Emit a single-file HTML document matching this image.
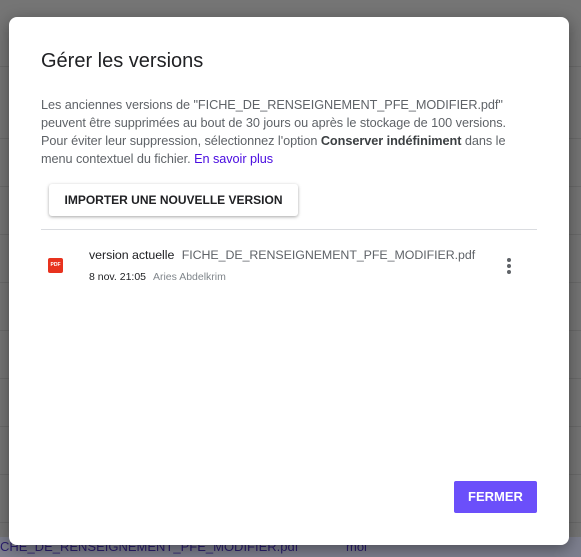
<!DOCTYPE html>
<html><head><meta charset="utf-8"><style>
body{margin:0;width:581px;height:557px;overflow:hidden;background:#757575;font-family:"Liberation Sans",sans-serif;position:relative}
.bgl{position:absolute;left:0;width:581px;height:1px;background:#6a6a6a}
.bt{position:absolute;color:#333;font-size:15px}
.dlg{position:absolute;left:9px;top:17px;width:560px;height:528px;background:#fff;border-radius:8px;box-shadow:0 4px 16px rgba(0,0,0,.4)}
h1{position:absolute;left:32px;top:33px;margin:0;font-weight:normal;font-size:20px;color:#202124}
.p{position:absolute;left:32px;top:79px;font-size:12.7px;line-height:18px;color:#5f6368;letter-spacing:-.05px;white-space:nowrap}
.p b{color:#3c4043}
.p a{color:#4a0de0;text-decoration:none}
.imp{position:absolute;left:40px;top:167px;width:249px;height:32px;box-shadow:0 1px 3px rgba(0,0,0,.35);border-radius:3px;font-size:12px;font-weight:bold;color:#202124;line-height:32px;text-align:center}
.hr{position:absolute;left:32px;top:212px;width:496px;height:1px;background:#dadce0}
.pdf{position:absolute;left:39px;top:241px;width:15px;height:15px;background:#e8321e;border-radius:2px;color:#fff;font-size:5px;font-weight:bold;line-height:15px;text-align:center}
.l1{position:absolute;left:80px;top:231px;font-size:12.4px;color:#202124;letter-spacing:-.05px}
.l1 span{color:#5f6368;margin-left:4px}
.l2{position:absolute;left:80px;top:254px;font-size:10.5px;color:#202124}
.l2 span{color:#80868b;margin-left:4px}
.dot{position:absolute;left:498px;width:4px;height:4px;border-radius:2px;background:#5f6368}
.fer{position:absolute;left:445px;top:464px;width:83px;height:32px;background:#6b4ffa;border-radius:2px;color:#fff;font-size:13px;font-weight:bold;line-height:32px;text-align:center}
</style></head><body>
<div class="bgl" style="top:66px"></div><div class="bgl" style="top:138px"></div><div class="bgl" style="top:186px"></div><div class="bgl" style="top:234px"></div><div class="bgl" style="top:282px"></div><div class="bgl" style="top:330px"></div><div class="bgl" style="top:378px"></div><div class="bgl" style="top:426px"></div><div class="bgl" style="top:474px"></div><div class="bgl" style="top:522px"></div>
<div style="position:absolute;left:0;top:537px;width:581px;height:20px;background:#7d7f8e"></div>
<div class="bt" style="left:0;top:539px;color:#2a1d6e;font-size:13px">CHE_DE_RENSEIGNEMENT_PFE_MODIFIER.pdf</div>
<div class="bt" style="left:346px;top:539px;color:#2a1d6e;font-size:13px">moi</div>
<div class="dlg">
<h1>Gérer les versions</h1>
<div class="p">Les anciennes versions de "FICHE_DE_RENSEIGNEMENT_PFE_MODIFIER.pdf"<br>peuvent être supprimées au bout de 30 jours ou après le stockage de 100 versions.<br>Pour éviter leur suppression, sélectionnez l'option <b>Conserver indéfiniment</b> dans le<br>menu contextuel du fichier. <a>En savoir plus</a></div>
<div class="imp">IMPORTER UNE NOUVELLE VERSION</div>
<div class="hr"></div>
<div class="pdf">PDF</div>
<div class="l1">version actuelle <span>FICHE_DE_RENSEIGNEMENT_PFE_MODIFIER.pdf</span></div>
<div class="l2">8 nov. 21:05 <span>Aries Abdelkrim</span></div>
<div class="dot" style="top:241px"></div><div class="dot" style="top:247px"></div><div class="dot" style="top:253px"></div>
<div class="fer">FERMER</div>
</div>
</body></html>
